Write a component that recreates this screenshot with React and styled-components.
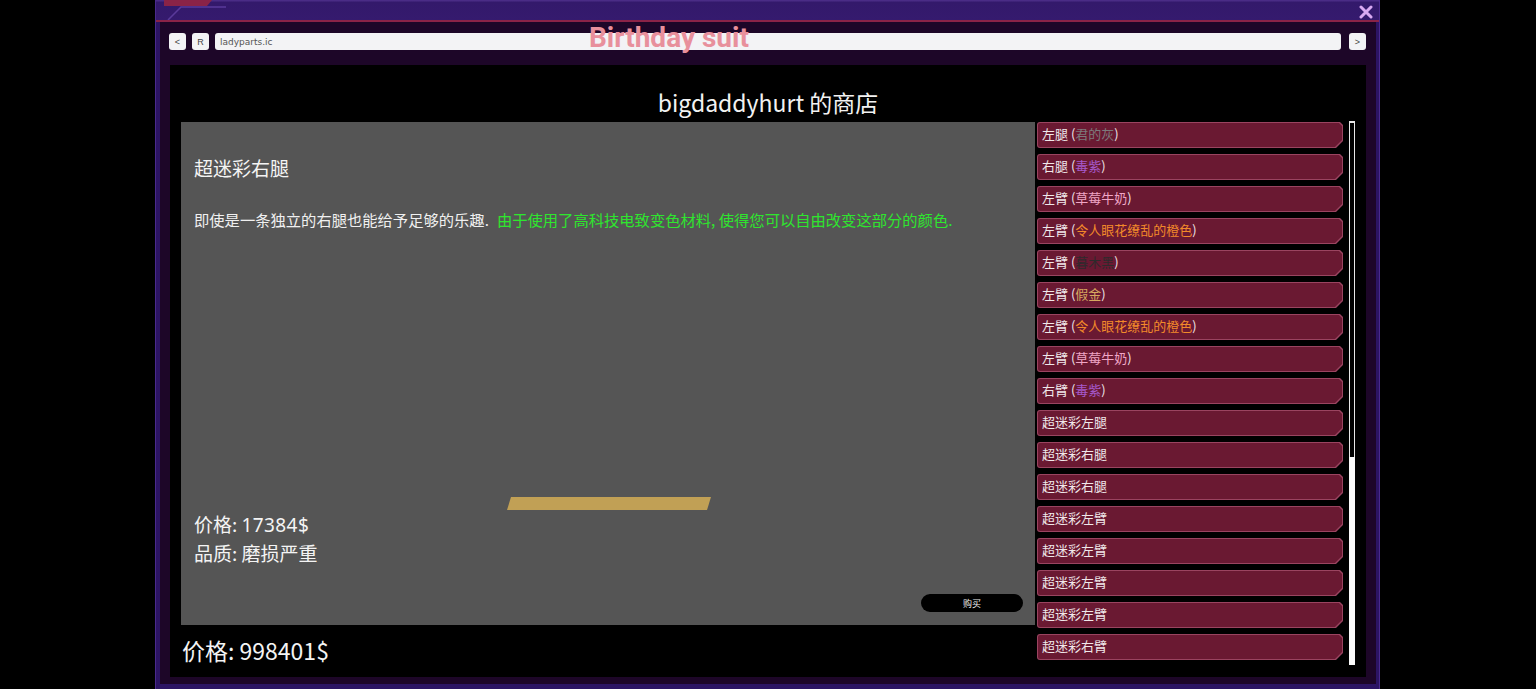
import React from "react";
import styled, { createGlobalStyle } from "styled-components";

const Global = createGlobalStyle`
  html, body { margin: 0; padding: 0; background: #000; }
  body { font-family: "Noto Sans CJK SC", "Noto Sans", sans-serif; overflow: hidden; }
  * { box-sizing: border-box; }
`;

const Page = styled.div`
  width: 1536px;
  height: 689px;
  background: #000;
  display: flex;
  padding-left: 155px;
`;

const Frame = styled.div`
  position: relative;
  width: 1225px;
  height: 689px;
  background: #2c1463;
  border-left: 1px solid #4a2a8c;
  border-right: 1px solid #4a2a8c;
  display: flex;
  flex-direction: column;
  padding: 0 3px 7px 4px;
`;

const TitleBar = styled.div`
  height: 22px;
  display: flex;
  align-items: flex-start;
  justify-content: space-between;
  background: linear-gradient(#4a2c86 0, #4a2c86 1px, #33196b 2px, #351a6e 100%);
  border-bottom: 2px solid #8a2347;
  margin: 0 -3px 0 -4px;
  padding: 0 5px 0 4px;
`;

const CloseBox = styled.div`
  width: 16px;
  height: 16px;
  margin-top: 4px;
  display: flex;
  align-items: center;
  justify-content: center;
`;

const Inner = styled.div`
  flex: 1;
  background: #1d0628;
  display: flex;
  flex-direction: column;
  padding: 11px 10px 7px 9px;
`;

const Toolbar = styled.div`
  height: 17px;
  display: flex;
  align-items: stretch;
  gap: 6px;
`;

const NavButton = styled.div`
  width: 17px;
  background: #f3f3f5;
  border-radius: 3px;
  display: flex;
  align-items: center;
  justify-content: center;
  font-family: "Liberation Sans", sans-serif;
  font-size: 9px;
  color: #444;
`;

const Address = styled.div`
  flex: 1;
  background: #f3f3f5;
  border-radius: 3px;
  display: flex;
  align-items: center;
  padding-left: 5px;
  font-family: "DejaVu Sans", sans-serif;
  font-size: 9px;
  color: #555;
  margin-right: 2px;
`;

const Watermark = styled.div`
  position: absolute;
  left: 433px;
  top: 21px;
  font-family: Roboto, sans-serif;
  font-weight: 700;
  font-size: 28px;
  line-height: 34px;
  color: #e8909c;
  pointer-events: none;
`;

const Content = styled.div`
  margin-top: 15px;
  margin-left: 1px;
  flex: 1;
  background: #000;
  display: flex;
  flex-direction: column;
  padding: 22px 11px 12px 11px;
  color: #fff;
`;

const ShopTitle = styled.div`
  text-align: center;
  font-size: 23px;
  line-height: 31px;
  height: 35px;
  color: #f2f2f2;
`;

const MainRow = styled.div`
  flex: 1;
  display: flex;
  min-height: 0;
`;

const LeftCol = styled.div`
  width: 854px;
  flex: none;
  display: flex;
  flex-direction: column;
`;

const Panel = styled.div`
  height: 503px;
  background: #555555;
  display: flex;
  flex-direction: column;
  padding: 33px 12px 13px 13px;
`;

const ItemName = styled.div`
  font-size: 19px;
  line-height: 26px;
  color: #f4f4f4;
`;

const Desc = styled.div`
  margin-top: 28px;
  font-size: 15.3px;
  line-height: 20px;
  color: #f0f0f0;
`;

const Green = styled.span`
  color: #2ee62e;
  margin-left: 8px;
`;

const Spacer = styled.div`
  flex: 1;
`;

const QualityBar = styled.div`
  margin-left: 313px;
  width: 204px;
  height: 13px;
  background: #c1a055;
  clip-path: polygon(4px 0, 100% 0, calc(100% - 4px) 100%, 0 100%);
`;

const Stat = styled.div`
  font-size: 19px;
  line-height: 28px;
  color: #f4f4f4;
`;

const Num = styled.span`
  font-family: "Noto Sans", "Noto Sans CJK SC", sans-serif;
  letter-spacing: 0.4px;
`;

const BuyButton = styled.div`
  margin-top: 27px;
  align-self: flex-end;
  width: 102px;
  height: 18px;
  border-radius: 9px;
  background: #000;
  color: #eee;
  font-size: 9px;
  display: flex;
  align-items: center;
  justify-content: center;
`;

const Total = styled.div`
  margin-top: 10px;
  padding-left: 1px;
  font-size: 23px;
  line-height: 30px;
  color: #f4f4f4;
`;

const List = styled.div`
  margin-left: 2px;
  width: 306px;
  flex: none;
  display: flex;
  flex-direction: column;
  gap: 6px;
  overflow: hidden;
`;

const ItemShape = "polygon(0 0, calc(100% - 3px) 0, 100% 3px, 100% calc(100% - 7px), calc(100% - 7px) 100%, 0 100%)";

const Item = styled.div`
  flex: none;
  height: 26px;
  padding: 1px;
  background: #9a4460;
  border-radius: 3px 0 0 3px;
  clip-path: ${ItemShape};
`;

const ItemInner = styled.div`
  height: 100%;
  background: #6a1932;
  border-radius: 2px 0 0 2px;
  clip-path: ${ItemShape};
  display: flex;
  align-items: center;
  padding: 0 0 3px 4px;
  font-size: 13px;
  color: #f0e8ea;
`;

const Tint = styled.span`
  color: ${(p) => p.$c};
`;

const ScrollTrack = styled.div`
  margin-left: 6px;
  width: 6px;
  flex: none;
  border: 1px solid #e8e8e8;
  border-top-width: 2px;
  display: flex;
  flex-direction: column;
  justify-content: flex-end;
  margin-top: -1px;
`;

const ScrollThumb = styled.div`
  height: 208px;
  margin: 0 -1px -1px;
  background: #fafafa;
`;

const C = {
  gray: "#7d7a7c",
  purple: "#a659cc",
  pink: "#f0a6c6",
  orange: "#f28a2a",
  dark: "#2e2a2c",
  gold: "#d6a860",
};

const items = [
  ["左腿", "君的灰", C.gray],
  ["右腿", "毒紫", C.purple],
  ["左臂", "草莓牛奶", C.pink],
  ["左臂", "令人眼花缭乱的橙色", C.orange],
  ["左臂", "暮木黑", C.dark],
  ["左臂", "假金", C.gold],
  ["左臂", "令人眼花缭乱的橙色", C.orange],
  ["左臂", "草莓牛奶", C.pink],
  ["右臂", "毒紫", C.purple],
  ["超迷彩左腿"],
  ["超迷彩右腿"],
  ["超迷彩右腿"],
  ["超迷彩左臂"],
  ["超迷彩左臂"],
  ["超迷彩左臂"],
  ["超迷彩左臂"],
  ["超迷彩右臂"],
];

function CornerDeco() {
  return (
    <svg width="70" height="20" viewBox="0 0 70 20">
      <path d="M4 0 H52 L47 6 H4 Z" fill="#8a2347" />
      <path d="M8 20 L21 7 H66" stroke="#5a3a9a" strokeWidth="1.5" fill="none" />
    </svg>
  );
}

function CloseIcon() {
  return (
    <svg width="14" height="14" viewBox="0 0 14 14">
      <path d="M2 2 L12 12 M12 2 L2 12" stroke="#d9a9f2" strokeWidth="3" strokeLinecap="round" />
    </svg>
  );
}

export default function App() {
  return (
    <Page>
      <Global />
      <Frame>
        <TitleBar>
          <CornerDeco />
          <CloseBox>
            <CloseIcon />
          </CloseBox>
        </TitleBar>
        <Inner>
          <Toolbar>
            <NavButton>&lt;</NavButton>
            <NavButton>R</NavButton>
            <Address>ladyparts.ic</Address>
            <NavButton>&gt;</NavButton>
          </Toolbar>
          <Content>
            <ShopTitle>bigdaddyhurt 的商店</ShopTitle>
            <MainRow>
              <LeftCol>
                <Panel>
                  <ItemName>超迷彩右腿</ItemName>
                  <Desc>
                    即使是一条独立的右腿也能给予足够的乐趣.
                    <Green>由于使用了高科技电致变色材料, 使得您可以自由改变这部分的颜色.</Green>
                  </Desc>
                  <Spacer />
                  <QualityBar />
                  <Stat>价格: <Num>17384$</Num></Stat>
                  <Stat>品质: 磨损严重</Stat>
                  <BuyButton>购买</BuyButton>
                </Panel>
                <Total>价格: 998401$</Total>
              </LeftCol>
              <List>
                {items.map(([a, b, c], i) => (
                  <Item key={i}>
                    <ItemInner>
                      {a}
                      {b && (
                        <>
                          &nbsp;(<Tint $c={c}>{b}</Tint>)
                        </>
                      )}
                    </ItemInner>
                  </Item>
                ))}
              </List>
              <ScrollTrack>
                <ScrollThumb />
              </ScrollTrack>
            </MainRow>
          </Content>
        </Inner>
        <Watermark>Birthday suit</Watermark>
      </Frame>
    </Page>
  );
}
